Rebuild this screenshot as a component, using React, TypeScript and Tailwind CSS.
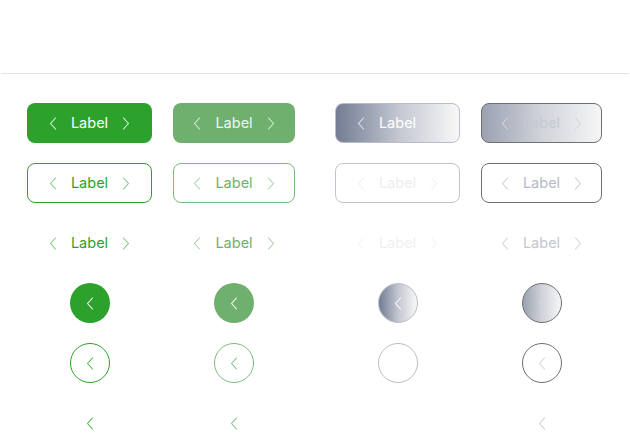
import React from "react";

type Tone = {
	box: string;
	text: string;
	icon: string;
};

function Chevron({ dir, className }: { dir: "left" | "right"; className?: string }) {
	return (
		<svg width="8" height="13" viewBox="0 0 8 13" fill="none" className={className}>
			<path
				d={dir === "left" ? "M6.5 1 L1.5 6.5 L6.5 12" : "M1.5 1 L6.5 6.5 L1.5 12"}
				stroke="currentColor"
				strokeWidth="1.1"
				strokeLinecap="round"
				strokeLinejoin="round"
			/>
		</svg>
	);
}

function LabelButton({ tone, width }: { tone: Tone; width: string }) {
	return (
		<button
			type="button"
			className={`flex h-10 ${width} items-center justify-center gap-[14px] rounded-lg ${tone.box}`}
		>
			<Chevron dir="left" className={tone.icon} />
			<span className={`pt-px text-[14.5px] leading-none ${tone.text}`}>Label</span>
			<Chevron dir="right" className={tone.icon} />
		</button>
	);
}

function IconButton({ tone }: { tone: Tone }) {
	return (
		<button type="button" className={`flex size-10 items-center justify-center rounded-full ${tone.box}`}>
			<Chevron dir="left" className={tone.icon} />
		</button>
	);
}

const green = {
	solid: { box: "bg-[#2ca22c]", text: "text-white", icon: "text-[#e6f3e6]" },
	outline: { box: "border border-[#2ca22c]", text: "text-[#2ca22c]", icon: "text-[#80c680]" },
	ghost: { box: "", text: "text-[#2ca22c]", icon: "text-[#80c680]" },
	iconSolid: { box: "bg-[#2ca22c]", text: "", icon: "text-white" },
	iconOutline: { box: "border border-[#2ca22c]", text: "", icon: "text-[#4fb34f]" },
	iconGhost: { box: "", text: "", icon: "text-[#4fb34f]" },
};

const greenMuted = {
	solid: { box: "bg-[#6fb06f]", text: "text-[#eef6ee]", icon: "text-[#d8ecd8]" },
	outline: { box: "border border-[#7cbb7c]", text: "text-[#6fb06f]", icon: "text-[#a6d3a6]" },
	ghost: { box: "", text: "text-[#6fb06f]", icon: "text-[#a6d3a6]" },
	iconSolid: { box: "bg-[#6fb06f]", text: "", icon: "text-white" },
	iconOutline: { box: "border border-[#7cbb7c]", text: "", icon: "text-[#80bd80]" },
	iconGhost: { box: "", text: "", icon: "text-[#80bd80]" },
};

const grey = {
	solid: {
		box: "border border-[#b9bdc8] bg-linear-to-r from-[#737c93] via-[#c2c6d0] to-[#f8f8f8]",
		text: "text-white",
		icon: "text-[#e4e6ec]",
	},
	outline: { box: "border border-[#bfc3cc]", text: "text-[#eceef2]", icon: "text-[#eef0f3]" },
	ghost: { box: "", text: "text-[#eef0f3]", icon: "text-[#f2f3f5]" },
	iconSolid: {
		box: "border border-[#b9bdc8] bg-linear-to-r from-[#737c93] via-[#c2c6d0] to-[#f8f8f8]",
		text: "",
		icon: "text-white",
	},
	iconOutline: { box: "border border-[#b9bdc8]", text: "", icon: "text-white" },
	iconGhost: { box: "", text: "", icon: "text-white" },
};

const greyMuted = {
	solid: {
		box: "border border-[#6f6f6f] bg-linear-to-r from-[#9ba1b1] via-[#d0d3da] to-[#f6f6f6]",
		text: "text-[#c6cad3]",
		icon: "text-[#d3d6dd]",
	},
	outline: { box: "border border-[#6f6f6f]", text: "text-[#b5bac6]", icon: "text-[#c7cbd3]" },
	ghost: { box: "", text: "text-[#c3c7d0]", icon: "text-[#cfd2d9]" },
	iconSolid: {
		box: "border border-[#6f6f6f] bg-linear-to-r from-[#9ba1b1] via-[#d0d3da] to-[#f6f6f6]",
		text: "",
		icon: "text-[#d3d6dd]",
	},
	iconOutline: { box: "border border-[#6f6f6f]", text: "", icon: "text-[#cfd2d9]" },
	iconGhost: { box: "", text: "", icon: "text-[#c7cbd3]" },
};

function Column({ set, width }: { set: typeof green; width: string }) {
	return (
		<div className={`flex ${width} flex-col items-center gap-5`}>
			<LabelButton tone={set.solid} width={width} />
			<LabelButton tone={set.outline} width={width} />
			<LabelButton tone={set.ghost} width={width} />
			<IconButton tone={set.iconSolid} />
			<IconButton tone={set.iconOutline} />
			<IconButton tone={set.iconGhost} />
		</div>
	);
}

export default function App() {
	return (
		<div className="min-h-[443px] w-[630px] bg-white font-['Inter',sans-serif]">
			<div className="mx-px h-[74px] border-b border-[#e4e4e4]" />
			<div className="flex gap-10 pt-[29px] pl-[27px]">
				<div className="flex gap-[21px]">
					<Column set={green} width="w-[125px]" />
					<Column set={greenMuted} width="w-[122px]" />
				</div>
				<div className="flex gap-[21px]">
					<Column set={grey} width="w-[125px]" />
					<Column set={greyMuted} width="w-[121px]" />
				</div>
			</div>
		</div>
	);
}
